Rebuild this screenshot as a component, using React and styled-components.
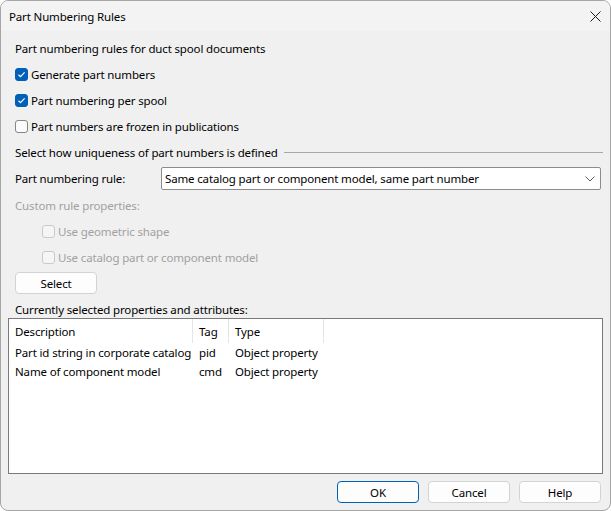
import React from "react"
import styled, { createGlobalStyle } from "styled-components"

const GlobalStyle = createGlobalStyle`
  html, body {
    margin: 0;
    padding: 0;
    background: #ffffff;
  }
  * {
    box-sizing: border-box;
  }
`

const Window = styled.div`
  width: 611px;
  height: 511px;
  border: 1px solid #a6a6a6;
  border-radius: 8px;
  overflow: hidden;
  background: #f0f0f0;
  display: flex;
  flex-direction: column;
  font-family: "Noto Sans", "Open Sans", sans-serif;
  font-size: 11.5px;
  letter-spacing: -0.15px;
  color: #000000;
`
const TitleBar = styled.div`
  height: 30px;
  flex: none;
  display: flex;
  align-items: center;
  justify-content: space-between;
  padding-left: 8px;
  background: #f3f3f3;
`
const CloseButton = styled.div`
  width: 30px;
  height: 30px;
  display: flex;
  align-items: center;
  justify-content: center;
`
const Body = styled.div`
  flex: 1;
  display: flex;
  flex-direction: column;
  padding: 4px 7px 7px 7px;
  min-height: 0;
`
const TextLine = styled.div`
  height: ${(p) => p.$h || 26}px;
  margin-top: ${(p) => p.$mt || 0}px;
  margin-left: 7px;
  display: flex;
  align-items: center;
  color: ${(p) => (p.$disabled ? "#a0a0a0" : "#000000")};
  flex: none;
`
const CheckRow = styled.label`
  height: 26px;
  display: flex;
  align-items: center;
  gap: 3px;
  padding-left: ${(p) => p.$indent || 7}px;
  color: ${(p) => (p.$disabled ? "#a0a0a0" : "#000000")};
  flex: none;
`
const CheckBox = styled.span`
  width: 13px;
  height: 13px;
  border-radius: 3px;
  display: flex;
  align-items: center;
  justify-content: center;
  background: ${(p) => (p.$checked ? "#005fb8" : p.$disabled ? "#f5f5f5" : "#fbfbfb")};
  border: 1px solid
    ${(p) => (p.$checked ? "#005fb8" : p.$disabled ? "#cacaca" : "#858585")};
`
const GroupHeader = styled.div`
  height: 27px;
  margin-left: 7px;
  display: flex;
  align-items: center;
  flex: none;

  &::after {
    content: "";
    flex: 1;
    height: 1px;
    margin-left: 6px;
    background: #a7a7a7;
  }
`
const ComboRow = styled.div`
  height: 23px;
  margin-top: 1px;
  margin-left: 7px;
  margin-right: 2px;
  display: flex;
  align-items: center;
  flex: none;
`
const ComboLabel = styled.span`
  width: 146px;
`
const Combo = styled.div`
  flex: 1;
  height: 23px;
  border: 1px solid #8c8c8c;
  border-radius: 2px;
  background: #ffffff;
  display: flex;
  align-items: center;
  justify-content: space-between;
  padding: 0 5px 0 3px;
`
const Button = styled.div`
  width: 82px;
  height: 22px;
  flex: none;
  border: 1px solid ${(p) => (p.$primary ? "#005fb8" : "#d3d3d3")};
  border-radius: 4px;
  background: #fdfdfd;
  display: flex;
  align-items: center;
  justify-content: center;
  margin-top: ${(p) => p.$mt || 0}px;
  margin-left: ${(p) => p.$ml || 0}px;
`
const ListBox = styled.div`
  flex: 1;
  min-height: 0;
  border: 1px solid #7a7a7a;
  background: #ffffff;
`
const ListGrid = styled.div`
  display: grid;
  grid-template-columns: 184px 36px 95px 1fr;
`
const HeadCell = styled.div`
  height: 24px;
  display: flex;
  align-items: center;
  padding-left: 6px;
  border-right: ${(p) => (p.$last ? "none" : "1px solid #e5e5e5")};
  white-space: nowrap;
`
const Cell = styled.div`
  height: 19px;
  display: flex;
  align-items: center;
  padding-left: 6px;
  white-space: nowrap;
  overflow: hidden;
`
const Footer = styled.div`
  display: flex;
  justify-content: flex-end;
  gap: 9px;
  margin-top: 7px;
  padding-right: 2px;
  flex: none;
`

const Check = ({ checked, disabled }) => (
  <CheckBox $checked={checked} $disabled={disabled}>
    {checked && (
      <svg width="11" height="11" viewBox="0 0 11 11">
        <path d="M2.5 5.8 L4.5 7.7 L8.6 3.4" fill="none" stroke="#ffffff" strokeWidth="1.2" />
      </svg>
    )}
  </CheckBox>
)

const CheckItem = ({ label, checked, disabled, indent }) => (
  <CheckRow $disabled={disabled} $indent={indent}>
    <Check checked={checked} disabled={disabled} />
    {label}
  </CheckRow>
)

const rows = [
  ["Part id string in corporate catalog", "pid", "Object property"],
  ["Name of component model", "cmd", "Object property"],
]

const App = () => {
  return (
    <Window>
      <GlobalStyle />
      <TitleBar>
        <span>Part Numbering Rules</span>
        <CloseButton>
          <svg width="11" height="11" viewBox="0 0 11 11">
            <path d="M0.5 0.5 L10.5 10.5 M10.5 0.5 L0.5 10.5" stroke="#1b1b1b" strokeWidth="1" />
          </svg>
        </CloseButton>
      </TitleBar>
      <Body>
        <TextLine>Part numbering rules for duct spool documents</TextLine>
        <CheckItem label="Generate part numbers" checked />
        <CheckItem label="Part numbering per spool" checked />
        <CheckItem label="Part numbers are frozen in publications" />
        <GroupHeader>Select how uniqueness of part numbers is defined</GroupHeader>
        <ComboRow>
          <ComboLabel>Part numbering rule:</ComboLabel>
          <Combo>
            <span>Same catalog part or component model, same part number</span>
            <svg width="10" height="6" viewBox="0 0 10 6">
              <path d="M0.5 0.5 L5 5 L9.5 0.5" fill="none" stroke="#606060" strokeWidth="1" />
            </svg>
          </Combo>
        </ComboRow>
        <TextLine $mt={2} $disabled>Custom rule properties:</TextLine>
        <CheckItem label="Use geometric shape" disabled indent={34} />
        <CheckItem label="Use catalog part or component model" disabled indent={34} />
        <Button $mt={2} $ml={7}>Select</Button>
        <TextLine $mt={6} $h={18}>Currently selected properties and attributes:</TextLine>
        <ListBox>
          <ListGrid>
            <HeadCell>Description</HeadCell>
            <HeadCell>Tag</HeadCell>
            <HeadCell>Type</HeadCell>
            <HeadCell $last />
            {rows.map((r) => (
              <React.Fragment key={r[1]}>
                <Cell>{r[0]}</Cell>
                <Cell>{r[1]}</Cell>
                <Cell>{r[2]}</Cell>
                <Cell />
              </React.Fragment>
            ))}
          </ListGrid>
        </ListBox>
        <Footer>
          <Button $primary>OK</Button>
          <Button>Cancel</Button>
          <Button>Help</Button>
        </Footer>
      </Body>
    </Window>
  )
}

export default App
